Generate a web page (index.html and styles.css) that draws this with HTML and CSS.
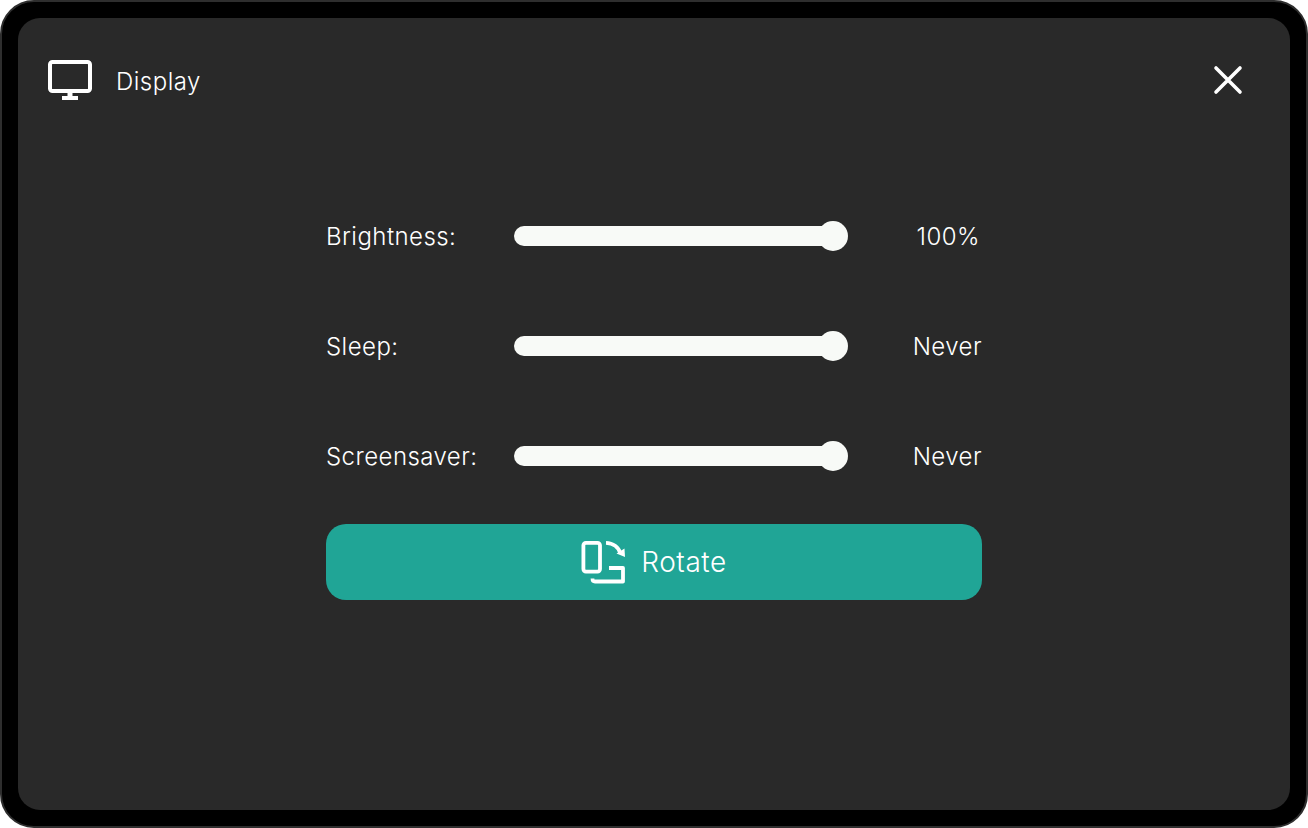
FILE: index.html
```html
<!DOCTYPE html>
<html lang="en">
<head>
  <meta charset="UTF-8" />
  <meta name="viewport" content="width=device-width, initial-scale=1" />
  <title>Display</title>
  <link rel="stylesheet" href="styles.css">
</head>
<body>
  <div class="device">
    <main class="screen">
      <header class="topbar">
        <div class="title">
          <svg class="title-icon" width="44" height="40" viewBox="0 0 44 40" fill="none" stroke="#fff" stroke-width="4" aria-hidden="true">
            <rect x="2" y="2" width="40" height="29" rx="2.500"/>
            <path d="M22 32v5" stroke-width="5"/>
            <path d="M14 38h16" stroke-width="4"/>
          </svg>
          <span class="title-text">Display</span>
        </div>
        <button class="close" aria-label="Close">
          <svg width="30" height="30" viewBox="0 0 30 30" fill="none" stroke="#fff" stroke-width="3.600" stroke-linecap="round" aria-hidden="true">
            <path d="M3 3l24 24M27 3L3 27"/>
          </svg>
        </button>
      </header>

      <section class="settings">
        <div class="row">
          <span class="label">Brightness:</span>
          <div class="slider"><span class="thumb"></span></div>
          <span class="value value-pct">100%</span>
        </div>
        <div class="row">
          <span class="label">Sleep:</span>
          <div class="slider"><span class="thumb"></span></div>
          <span class="value">Never</span>
        </div>
        <div class="row">
          <span class="label">Screensaver:</span>
          <div class="slider"><span class="thumb"></span></div>
          <span class="value">Never</span>
        </div>
        <button class="rotate">
          <svg width="44" height="44" viewBox="0 0 44 44" fill="none" stroke="#fff" stroke-width="3.800" stroke-linejoin="round" aria-hidden="true">
            <rect x="2.400" y="2.800" width="16.600" height="28.800" rx="2.500"/>
            <path d="M25 2.800C32 3 37.500 7 39.500 13.500"/>
            <path d="M35.500 13.500L44 17L43.500 8.500z" fill="#fff" stroke="none"/>
            <path d="M28 28H42V41.500H14C12 41.500 11.500 40.500 11.500 38.500"/>
          </svg>
          <span>Rotate</span>
        </button>
      </section>
    </main>
  </div>
</body>
</html>
```

FILE: styles.css
```css
* {
  box-sizing: border-box;
}
body {
  margin: 0;
  background: #fff;
  font-family: Inter, "Noto Sans", sans-serif;
  color: #fff;
}
.device {
  width: 1308px;
  height: 828px;
  padding: 16px;
  background: #000;
  border: 2px solid #2e2e2e;
  border-radius: 34px;
}
.screen {
  height: 100%;
  background: #292929;
  border-radius: 22px;
  padding: 42px 46px 0 30px;
}

/* Top bar */
.topbar {
  display: flex;
  justify-content: space-between;
  align-items: center;
  height: 40px;
}
.title {
  display: flex;
  align-items: center;
  gap: 24px;
  font-size: 24px;
  font-weight: 300;
  letter-spacing: 0.5px;
}
.title-text {
  margin-top: 2px;
}
.close {
  background: none;
  border: 0;
  padding: 0;
  margin-right: 1px;
  display: flex;
}

/* Settings */
.settings {
  width: 656px;
  margin: 106px 0 0 278px;
}
.row {
  display: flex;
  align-items: center;
  height: 60px;
  margin-bottom: 50px;
  font-size: 24px;
  font-weight: 300;
  letter-spacing: 0.45px;
}
.row:last-of-type {
  margin-bottom: 38px;
}
.label {
  width: 188px;
}
.slider {
  position: relative;
  width: 320px;
  height: 20px;
  background: #f8faf7;
  border-radius: 10px;
}
.thumb {
  position: absolute;
  right: -14px;
  top: -5px;
  width: 30px;
  height: 30px;
  border-radius: 50%;
  background: #f8faf7;
}
.value {
  margin-left: auto;
}
.value-pct {
  margin-right: 2px;
}
.rotate {
  display: flex;
  justify-content: center;
  align-items: center;
  gap: 16px;
  width: 100%;
  height: 76px;
  background: #20a596;
  border: 0;
  border-radius: 20px;
  color: #fff;
  font: inherit;
  font-size: 28px;
  font-weight: 300;
  letter-spacing: 0.55px;
}
```
